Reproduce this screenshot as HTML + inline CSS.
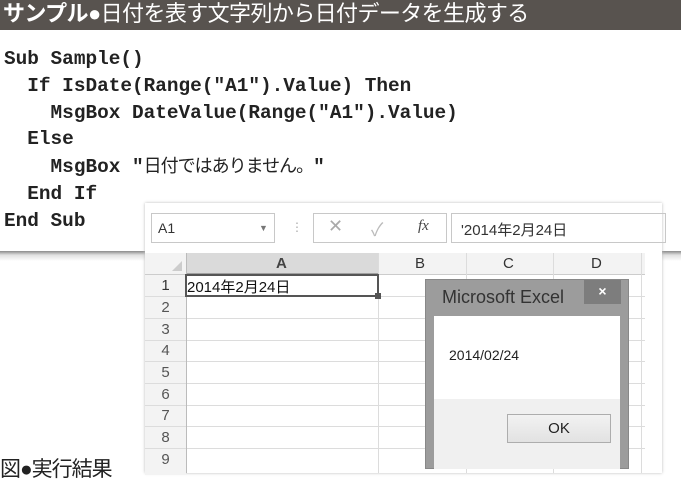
<!DOCTYPE html>
<html><head><meta charset="utf-8"><style>
*{margin:0;padding:0;box-sizing:border-box}
body{width:681px;height:469px;overflow:hidden;background:#fff;position:relative;font-family:"Liberation Sans","Noto Sans CJK JP",sans-serif}
.hdr{position:absolute;left:0;top:0;width:681px;height:30px;background:#58534f;color:#fff;font-size:22px;line-height:27px;padding-left:3px;white-space:nowrap;letter-spacing:-0.6px}
.hdr b{font-weight:bold}
.code{position:absolute;left:4px;top:46px;font-family:"Liberation Mono","Noto Sans CJK JP",monospace;font-weight:bold;font-size:19.4px;line-height:26.8px;color:#222;white-space:pre}
.code .j{font-family:"Liberation Sans","Noto Sans CJK JP",sans-serif;font-weight:normal;font-size:18px;letter-spacing:-1px}
.shadow{position:absolute;left:0;top:251px;width:681px;height:10px;background:linear-gradient(#8a8a8a,#e0e0e0 40%,#fff)}
.xl{position:absolute;left:145px;top:203px;width:517px;height:270px;background:#fff;box-shadow:0 0 3px #bbb}
.a{position:absolute}
.t{font-size:13px;color:#333}
.hline{position:absolute;height:1px;background:#dcdcdc}
.vline{position:absolute;width:1px;background:#dcdcdc}
.rn{position:absolute;left:0;width:41px;text-align:center;font-size:15px;color:#555}
</style></head><body>
<div class="hdr"><b>サンプル●</b>日付を表す文字列から日付データを生成する</div>
<div class="code">Sub Sample()
  If IsDate(Range("A1").Value) Then
    MsgBox DateValue(Range("A1").Value)
  Else
    MsgBox "<span class="j">日付ではありません。</span>"
  End If
End Sub</div>
<div class="shadow"></div>
<div class="xl">
 <div class="a" style="left:6px;top:10px;width:124px;height:30px;border:1px solid #c8c8c8"></div>
 <div class="a t" style="left:13px;top:17px;font-size:14px">A1</div>
 <div class="a" style="left:114px;top:20px;font-size:9px;color:#777">▼</div>
 <div class="a" style="left:146px;top:17px;color:#aaa;font-size:12px">⋮</div>
 <div class="a" style="left:168px;top:10px;width:134px;height:30px;border:1px solid #c8c8c8"></div>
 <div class="a" style="left:183px;top:13px;color:#aaa;font-size:18px">✕</div>
 <div class="a" style="left:226px;top:13px;color:#bbb;font-size:18px">✓</div>
 <div class="a" style="left:273px;top:15px;color:#444;font-size:15px;font-style:italic;font-family:'Liberation Serif',serif">fx</div>
 <div class="a" style="left:306px;top:10px;width:215px;height:30px;border:1px solid #c8c8c8"></div>
 <div class="a t" style="left:316px;top:16px;font-size:15px">'2014年2月24日</div>
 <div class="a" style="left:0;top:50px;width:500px;height:22px;background:#f3f3f3;border-bottom:1px solid #ccc"></div>
 <div class="a" style="left:41px;top:50px;width:192px;height:22px;background:#dadada;border-bottom:2px solid #a0a0a0"></div>
 <div class="a" style="left:27px;top:58px;width:0;height:0;border-left:10px solid transparent;border-bottom:10px solid #ccc"></div>
 <div class="a t" style="left:131px;top:52px;font-weight:bold;font-size:15px;color:#444">A</div>
 <div class="a t" style="left:270px;top:52px;font-size:15px">B</div>
 <div class="a t" style="left:358px;top:52px;font-size:15px">C</div>
 <div class="a t" style="left:446px;top:52px;font-size:15px">D</div>
 <div class="a" style="left:0;top:72px;width:41px;height:200px;background:#f3f3f3"></div>
 <div class="hline" style="left:0;top:93px;width:500px"></div>
 <div class="hline" style="left:0;top:115px;width:500px"></div>
 <div class="hline" style="left:0;top:137px;width:500px"></div>
 <div class="hline" style="left:0;top:158px;width:500px"></div>
 <div class="hline" style="left:0;top:180px;width:500px"></div>
 <div class="hline" style="left:0;top:202px;width:500px"></div>
 <div class="hline" style="left:0;top:223px;width:500px"></div>
 <div class="hline" style="left:0;top:245px;width:500px"></div>
 <div class="vline" style="left:41px;top:50px;height:220px;background:#bbb"></div>
 <div class="vline" style="left:233px;top:50px;height:220px"></div>
 <div class="vline" style="left:321px;top:50px;height:220px"></div>
 <div class="vline" style="left:408px;top:50px;height:220px"></div>
 <div class="vline" style="left:496px;top:50px;height:220px"></div>
 <div class="rn" style="top:74px;color:#333">1</div>
 <div class="rn" style="top:96px">2</div>
 <div class="rn" style="top:118px">3</div>
 <div class="rn" style="top:139px">4</div>
 <div class="rn" style="top:161px">5</div>
 <div class="rn" style="top:183px">6</div>
 <div class="rn" style="top:204px">7</div>
 <div class="rn" style="top:226px">8</div>
 <div class="rn" style="top:248px">9</div>
 <div class="a" style="left:40px;top:71px;width:194px;height:23px;border:2px solid #555"></div>
 <div class="a" style="left:230px;top:90px;width:6px;height:6px;background:#555"></div>
 <div class="a t" style="left:42px;top:73px;font-size:15px;color:#111">2014年2月24日</div>
</div>
<div class="a" style="left:425px;top:279px;width:204px;height:190px;background:#9c9c9c;border:1px solid #888"></div>
<div class="a" style="left:442px;top:287px;font-size:18px;color:#333">Microsoft Excel</div>
<div class="a" style="left:584px;top:280px;width:37px;height:24px;background:#7d7d7d;color:#fff;text-align:center;font-size:14px;line-height:22px;font-weight:bold">×</div>
<div class="a" style="left:434px;top:316px;width:186px;height:83px;background:#fff"></div>
<div class="a" style="left:434px;top:399px;width:186px;height:70px;background:#f0f0f0"></div>
<div class="a" style="left:449px;top:347px;font-size:14px;color:#222">2014/02/24</div>
<div class="a" style="left:507px;top:414px;width:104px;height:29px;border:1px solid #adadad;background:linear-gradient(#f2f2f2,#e2e2e2);text-align:center;line-height:27px;font-size:15px;color:#222">OK</div>
<div class="a" style="left:0;top:453px;font-size:21px;color:#222;white-space:nowrap;letter-spacing:-1px">図●実行結果</div>
</body></html>
